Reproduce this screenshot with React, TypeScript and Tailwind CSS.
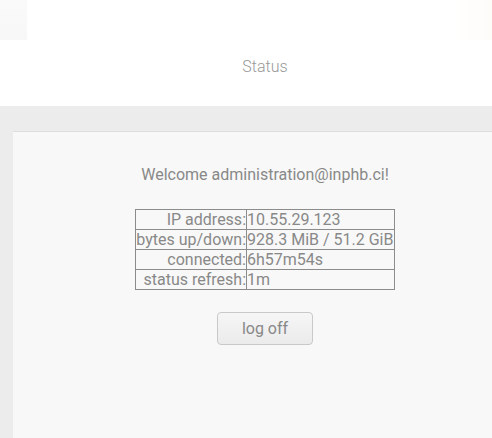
import React from "react";

export default function App() {
  const rows: [string, string][] = [
    ["IP address:", "10.55.29.123"],
    ["bytes up/down:", "928.3 MiB / 51.2 GiB"],
    ["connected:", "6h57m54s"],
    ["status refresh:", "1m"],
  ];
  return (
    <div className="w-[492px] h-[438px] overflow-hidden bg-[#ececec]" style={{ fontFamily: "Roboto, 'Liberation Sans', sans-serif" }}>
      <div className="w-[530px]">
        <div className="h-10 flex bg-white">
          <div className="w-[27px] bg-gradient-to-b from-[#fafafa] to-[#f7f7f7]" />
          <div className="flex-1 bg-white" />
          <div className="w-[80px] bg-gradient-to-r from-white via-[#fefcf9] to-[#fcf8f0]" />
        </div>
        <div className="h-[66px] bg-white flex items-center justify-center pb-[12px]">
          <span className="text-[16px] text-[#999] font-light leading-none">Status</span>
        </div>
        <div className="px-[13px] pt-[25px]">
          <div className="bg-[#f8f8f8] border-t border-[#dedede] h-[320px] flex flex-col items-center pt-[33px]">
            <div className="text-[16px] leading-[19px] text-[#888]">Welcome administration@inphb.ci!</div>
            <table className="mt-[25px] border-collapse border border-[#8c8c8c] text-[16px] text-[#888] leading-[19px]">
              <tbody>
                {rows.map(([k, v]) => (
                  <tr key={k}>
                    <td className="border border-[#8c8c8c] text-right px-0 py-0 w-[111px] whitespace-nowrap">{k}</td>
                    <td className="border border-[#8c8c8c] text-left px-0 py-0 w-[148px] whitespace-nowrap">{v}</td>
                  </tr>
                ))}
              </tbody>
            </table>
            <button className="mt-[22px] w-[96px] h-[33px] rounded-[4px] border border-[#c9c9c9] bg-gradient-to-b from-[#f6f6f6] to-[#ebebeb] text-[16px] text-[#888]">log off</button>
          </div>
        </div>
      </div>
    </div>
  );
}
